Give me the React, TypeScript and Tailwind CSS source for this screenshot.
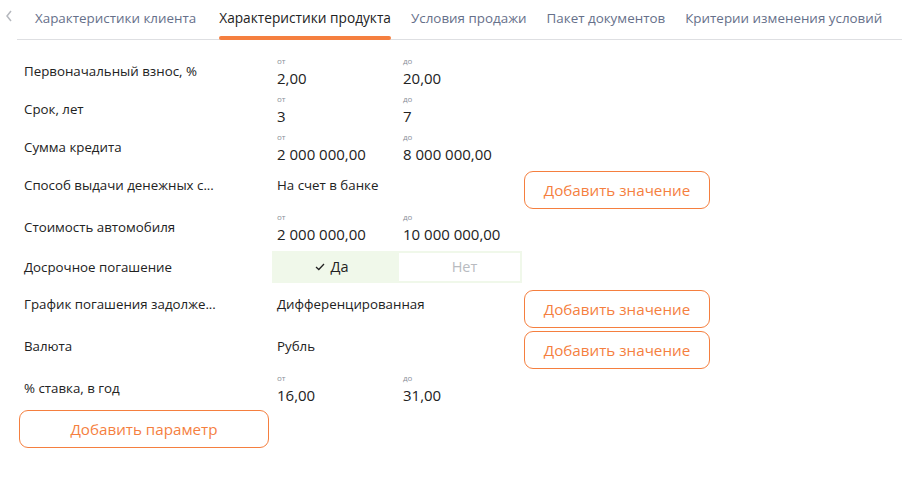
import React from "react";

const tabs = [
  "Характеристики клиента",
  "Характеристики продукта",
  "Условия продажи",
  "Пакет документов",
  "Критерии изменения условий",
];

function Range({ from, to }: { from: string; to: string }) {
  return (
    <div className="flex mt-[1px]">
      <div className="w-[126px] flex flex-col">
        <span className="text-[8px] leading-[12px] text-[#8a8f99]">от</span>
        <span className="text-[15px] leading-[22px] text-[#222]">{from}</span>
      </div>
      <div className="flex flex-col">
        <span className="text-[8px] leading-[12px] text-[#8a8f99]">до</span>
        <span className="text-[15px] leading-[22px] text-[#222]">{to}</span>
      </div>
    </div>
  );
}

function AddBtn({ children, w = "w-[186px]" }: { children: React.ReactNode; w?: string }) {
  return (
    <button
      className={`${w} h-[38px] rounded-[9px] border border-[#f57f3f] text-[#f57f3f] text-[15.2px] bg-white`}
    >
      {children}
    </button>
  );
}

function Label({ children, mt = "mt-[7px]" }: { children: React.ReactNode; mt?: string }) {
  return <div className={`w-[253px] ${mt} leading-[20px] shrink-0`}>{children}</div>;
}

export default function App() {
  return (
    <div
      className="w-[902px] h-[481px] bg-white text-[#222]"
      style={{ fontFamily: '"Open Sans", "Noto Sans", sans-serif' }}
    >
      {/* tabs */}
      <div className="flex items-stretch h-[40px]">
        <div className="w-[17px] flex items-start justify-center pt-[10px]">
          <svg width="8" height="12" viewBox="0 0 8 12">
            <path d="M6 1 L2 6 L6 11" fill="none" stroke="#b5b8be" strokeWidth="1.5" />
          </svg>
        </div>
        <div className="flex-1 flex gap-[20px] pl-[18px] border-b border-[#dedfe2]">
          {tabs.map((t, i) => (
            <div
              key={t}
              className={`relative pt-[8px] whitespace-nowrap ${
                i === 1 ? "text-[#222] text-[13.7px]" : "text-[#66708a] text-[13.4px]"
              } ${i === 0 ? "mr-[3px]" : ""}`}
            >
              {t}
              {i === 1 && (
                <div className="absolute left-0 right-0 bottom-[-1px] h-[4px] rounded-full bg-[#f57f3f]" />
              )}
            </div>
          ))}
        </div>
      </div>

      <div className="pl-[24px] pt-[14px] flex flex-col text-[13.3px]">
        <div className="flex items-start h-[38px]">
          <Label>Первоначальный взнос, %</Label>
          <Range from="2,00" to="20,00" />
        </div>
        <div className="flex items-start h-[38px]">
          <Label>Срок, лет</Label>
          <Range from="3" to="7" />
        </div>
        <div className="flex items-start h-[38px]">
          <Label>Сумма кредита</Label>
          <Range from="2 000 000,00" to="8 000 000,00" />
        </div>
        <div className="flex items-start h-[42px]">
          <Label>Способ выдачи денежных с...</Label>
          <div className="w-[247px] mt-[7px] leading-[20px]">На счет в банке</div>
          <div className="mt-[3px]">
            <AddBtn>Добавить значение</AddBtn>
          </div>
        </div>
        <div className="flex items-start h-[38px]">
          <Label>Стоимость автомобиля</Label>
          <Range from="2 000 000,00" to="10 000 000,00" />
        </div>
        <div className="flex items-start h-[39px]">
          <div className="w-[248px] mt-[9px] leading-[20px] shrink-0">Досрочное погашение</div>
          <div className="mt-[3px] w-[250px] h-[32px] bg-[#f0f8ea] p-[2px] flex">
            <div className="w-[125px] pr-[10px] flex items-center justify-center gap-[6px] text-[14.5px] text-[#222]">
              <svg width="10" height="8" viewBox="0 0 10 8">
                <path d="M1 4 L3.8 6.5 L9 1" fill="none" stroke="#222" strokeWidth="1.3" />
              </svg>
              Да
            </div>
            <div className="flex-1 pl-[10px] bg-white flex items-center justify-center text-[14.5px] text-[#b8bbc0]">
              Нет
            </div>
          </div>
        </div>
        <div className="flex items-start h-[42px]">
          <Label>График погашения задолже...</Label>
          <div className="w-[247px] mt-[7px] leading-[20px]">Дифференцированная</div>
          <div className="mt-[3px]">
            <AddBtn>Добавить значение</AddBtn>
          </div>
        </div>
        <div className="flex items-start h-[42px]">
          <Label>Валюта</Label>
          <div className="w-[247px] mt-[7px] leading-[20px]">Рубль</div>
          <div className="mt-[2px]">
            <AddBtn>Добавить значение</AddBtn>
          </div>
        </div>
        <div className="flex items-start h-[39px]">
          <Label>% ставка, в год</Label>
          <Range from="16,00" to="31,00" />
        </div>
        <div className="ml-[-5px]">
          <AddBtn w="w-[250px]">Добавить параметр</AddBtn>
        </div>
      </div>
    </div>
  );
}
